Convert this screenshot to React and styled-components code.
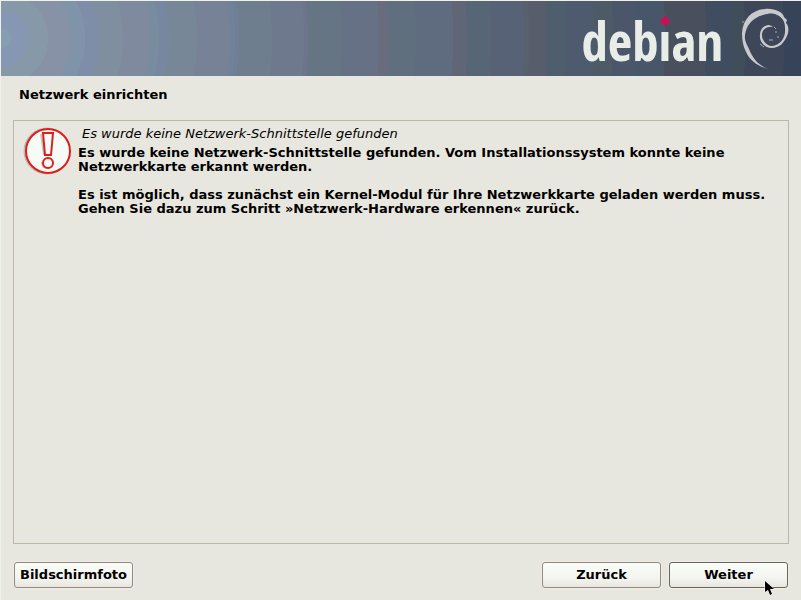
import React from "react";
import styled, { createGlobalStyle } from "styled-components";

const GlobalStyle = createGlobalStyle`
  *, *::before, *::after { box-sizing: border-box; }
  body {
    margin: 0;
    background: #e8e7df;
    color: #000;
    font-family: "DejaVu Sans", sans-serif;
    font-size: 13px;
  }
`;

const bands = [
  ["#869fb0", 10], ["#8597b2", 28], ["#8798a8", 47], ["#8792a6", 70],
  ["#7f94a8", 84], ["#7e8ea9", 98], ["#7f8f9f", 122], ["#7f8a9f", 149],
  ["#788c9f", 158], ["#7787a0", 168], ["#778797", 196], ["#778296", 229],
  ["#6f8297", 234], ["#6e7f97", 238], ["#6e7e8e", 271], ["#6e798d", 303],
  ["#6e758b", 307], ["#667584", 341], ["#667185", 378], ["#686c7c", 387],
  ["#5f6f7e", 415], ["#5f6b7f", 452], ["#616677", 466], ["#576674", 490],
  ["#576276", 523], ["#57616e", 528], ["#585d6c", 546], ["#4e5e6d", 565],
  ["#4e5a6e", 593], ["#4e5a65", 612], ["#4c566a", 636], ["#48566a", 664],
  ["#4a4f5d", 705], ["#404d60", 733], ["#3f4e59", 744], ["#3e475a", 783],
  ["#364358", 820],
];

const bandStops = bands
  .map(([color, end], i) => `${color} ${i ? bands[i - 1][1] : 0}px ${end}px`)
  .join(", ");

const Screen = styled.div`
  min-height: 100vh;
  display: flex;
  flex-direction: column;
  border-top: 1px solid #eff1ea;
  border-left: 1px solid #eff1ea;
`;

const Banner = styled.header`
  height: 75px;
  flex: none;
  display: flex;
  justify-content: flex-end;
  align-items: center;
  gap: 18px;
  padding-right: 11px;
  background: radial-gradient(circle at 0 50%, ${bandStops}, #364358 820px);
`;

const Wordmark = styled.span`
  color: #e8ede8;
  padding-top: 4px;
  font: bold 53px/60px "Open Sans Condensed", "Roboto Condensed", "DejaVu Sans Condensed", sans-serif;
`;

const Stem = styled.span`
  position: relative;
  display: inline-block;
`;

const StemLetter = styled.span`
  display: inline-block;
  clip-path: inset(20px 0 0 0);
`;

const Diamond = styled.svg`
  position: absolute;
  top: 5px;
  left: 50%;
  margin-left: -5px;
`;

const Title = styled.h1`
  margin: 0;
  padding: 11px 18px 0;
  font-size: 13px;
  line-height: 16px;
`;

const Panel = styled.main`
  flex: 1;
  display: flex;
  align-items: flex-start;
  gap: 5px;
  margin: 17px 12px 0;
  padding: 4px 8px;
  border: 1px solid #bcb8a5;
`;

const Message = styled.div`
  flex: 1;
  font-weight: bold;
  line-height: 14px;
`;

const Summary = styled.p`
  margin: 0 0 4px 4px;
  font-weight: normal;
  font-style: italic;
  line-height: 17px;
`;

const Paragraph = styled.p`
  margin: 0 0 14px;
`;

const Footer = styled.footer`
  display: flex;
  gap: 8px;
  padding: 18px 13px 12px;
`;

const Button = styled.button`
  width: 119px;
  height: 26px;
  padding: 0 0 2px;
  border: 1px solid ${(p) => (p.$primary ? "#696558" : "#94897a")};
  border-radius: 3px;
  background: linear-gradient(#fafcf8, #f4f5f1 60%, #e9e6e0);
  box-shadow: 0 0 0 1px #eeede7;
  color: #000;
  font: bold 13px "DejaVu Sans", sans-serif;
  ${(p) => p.$start && "margin-right: auto;"}
`;

const Pointer = styled.svg`
  position: absolute;
  right: 26px;
  bottom: 4px;
  pointer-events: none;
`;

const Swirl = () => (
  <svg width="49" height="62" viewBox="0 0 49 62" aria-hidden="true">
    <path
      fill="#c9cacb"
      d="M28 61C18 59 9 53 5 44C2 38 1 32 1 25C2 11 11 2 24 1C33 0 42 4 43 9L46 12L45 15C48 18 48 23 46 28C43 35 38 40 31 40C24 40 18 34 19 27C19 21 23 17 28 17L33 19C26 18 21 21 21 27C21 33 26 38 31 38C39 37 45 30 44 20C44 13 41 9 36 7C33 5 28 5 22 7C11 10 5 18 4 27C3 33 7 38 8 41C12 51 18 58 28 61Z"
    />
    <path fill="none" stroke="#a6abb0" d="M2 15V13M19 36L23 39M28 32H32M34 24H36M36 29H38M33 19L35 21" />
  </svg>
);

const Warning = () => (
  <svg width="51" height="50" viewBox="0 0 51 50" role="img" aria-label="Fehler">
    <circle cx="25" cy="26" r="22" fill="none" stroke="#bdbdb6" strokeWidth="3" />
    <circle cx="26" cy="26" r="22" fill="#f7fbf6" stroke="#df1d1d" strokeWidth="2" />
    <path d="M19 9L22 30M20 37A6 6 0 0 0 24 43" fill="none" stroke="#c6c8c2" strokeWidth="2" />
    <path d="M21 8H31L29 30H23Z" fill="#f7fbf6" stroke="#df1d1d" strokeWidth="2" />
    <circle cx="26" cy="38" r="5" fill="#f7fbf6" stroke="#df1d1d" strokeWidth="2" />
  </svg>
);

export default function App() {
  return (
    <Screen>
      <GlobalStyle />
      <Banner>
        <Wordmark>
          deb
          <Stem>
            <StemLetter>i</StemLetter>
            <Diamond width="10" height="10" viewBox="0 0 10 10" aria-hidden="true">
              <path d="M5 0L10 5L5 10L0 5Z" fill="#d70751" />
            </Diamond>
          </Stem>
          an
        </Wordmark>
        <Swirl />
      </Banner>
      <Title>Netzwerk einrichten</Title>
      <Panel>
        <Warning />
        <Message>
          <Summary>Es wurde keine Netzwerk-Schnittstelle gefunden</Summary>
          <Paragraph>
            Es wurde keine Netzwerk-Schnittstelle gefunden. Vom Installationssystem konnte keine
            Netzwerkkarte erkannt werden.
          </Paragraph>
          <Paragraph>
            Es ist möglich, dass zunächst ein Kernel-Modul für Ihre Netzwerkkarte geladen werden muss.
            Gehen Sie dazu zum Schritt »Netzwerk-Hardware erkennen« zurück.
          </Paragraph>
        </Message>
      </Panel>
      <Footer>
        <Button type="button" $start>Bildschirmfoto</Button>
        <Button type="button">Zurück</Button>
        <Button type="button" $primary>Weiter</Button>
      </Footer>
      <Pointer width="11" height="16" viewBox="0 0 11 16" aria-hidden="true">
        <path d="M1 1V12L4 10L6 15L8 14L6 9H10Z" fill="#000" stroke="#fff" strokeWidth="1" paintOrder="stroke" />
      </Pointer>
    </Screen>
  );
}
